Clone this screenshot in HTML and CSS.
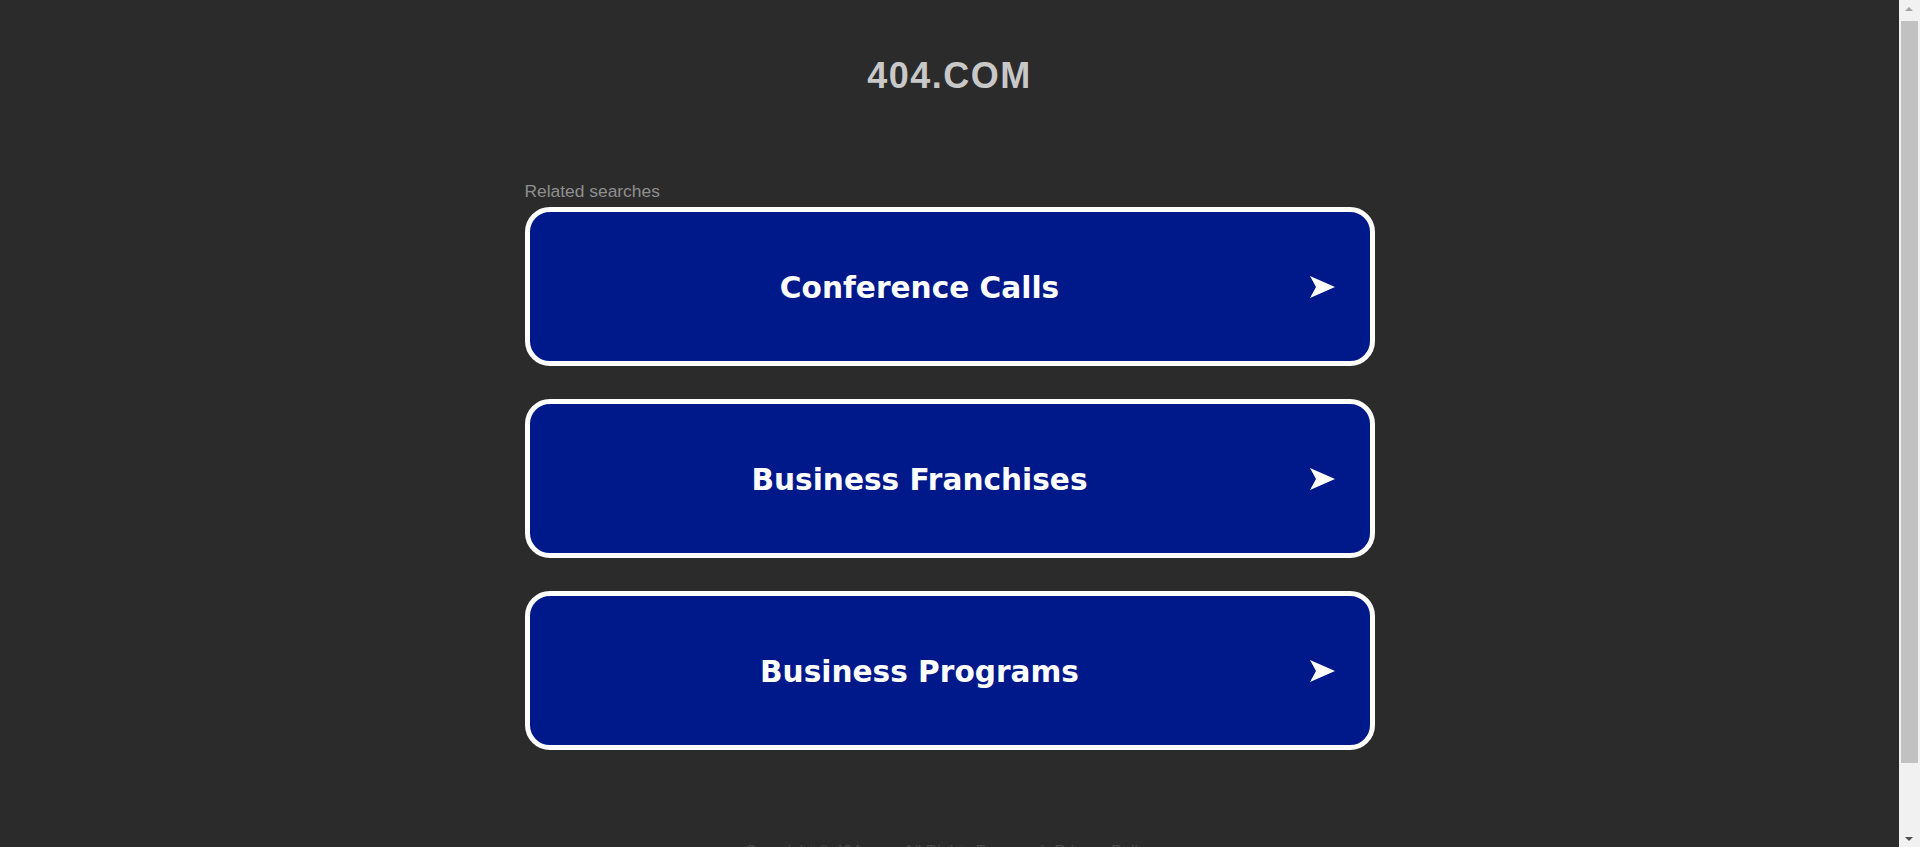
FILE: index.html
```html
<!DOCTYPE html>
<html lang="en">
<head>
<meta charset="utf-8">
<title>404.com</title>
<link rel="stylesheet" href="styles.css">
</head>
<body>
<div class="page">
  <header class="header">
    <h1 class="logo">404.COM</h1>
  </header>
  <main class="content">
    <div class="label">Related searches</div>
    <ul class="links">
      <li><a class="link" href="#"><span class="link-text">Conference Calls</span><svg class="arrow" viewBox="0 0 25 22" aria-hidden="true"><polygon points="0,0 25,11 0,22 6,11"/></svg></a></li>
      <li><a class="link" href="#"><span class="link-text">Business Franchises</span><svg class="arrow" viewBox="0 0 25 22" aria-hidden="true"><polygon points="0,0 25,11 0,22 6,11"/></svg></a></li>
      <li><a class="link" href="#"><span class="link-text">Business Programs</span><svg class="arrow" viewBox="0 0 25 22" aria-hidden="true"><polygon points="0,0 25,11 0,22 6,11"/></svg></a></li>
    </ul>
  </main>
  <footer class="footer">
    <span>Copyright &copy; 404.com. All Rights Reserved.</span>
    <a href="#" class="footer-link">Privacy Policy</a>
  </footer>
</div>
<div class="scrollbar" aria-hidden="true">
  <div class="sb-btn sb-up"></div>
  <div class="sb-track"><div class="sb-thumb"></div></div>
  <div class="sb-btn sb-down"></div>
</div>
</body>
</html>
```

FILE: styles.css
```css
html, body {
  margin: 0;
  padding: 0;
}
html {
  overflow: hidden;
}
body {
  background: #2b2b2b;
  font-family: "Liberation Sans", Arial, sans-serif;
}
.page {
  display: flex;
  flex-direction: column;
  align-items: center;
  min-height: 923px;
  margin-right: 21px;
}
.header {
  padding-top: 50px;
}
.logo {
  margin: 0;
  font-size: 36px;
  line-height: 52px;
  font-weight: bold;
  letter-spacing: 1.5px;
  color: #c8c8c8;
}
.content {
  width: 850px;
  margin-top: 79px;
}
.label {
  font-size: 17.4px;
  line-height: 20px;
  color: #8f8f8f;
  margin-bottom: 6px;
}
.links {
  list-style: none;
  margin: 0;
  padding: 0;
  display: flex;
  flex-direction: column;
  gap: 33px;
}
.link {
  display: flex;
  align-items: center;
  box-sizing: border-box;
  height: 159px;
  border: 5px solid #ffffff;
  border-radius: 25px;
  background: #00198a;
  color: #ffffff;
  text-decoration: none;
  padding-right: 35px;
}
.link-text {
  flex: 1;
  text-align: center;
  font-family: "DejaVu Sans", Verdana, sans-serif;
  font-weight: bold;
  font-size: 29.6px;
  padding-top: 3px;
}
.arrow {
  width: 25px;
  height: 22px;
  fill: #ffffff;
}
.footer {
  margin-top: 93px;
  font-size: 16px;
  color: #4a4a4a;
  display: flex;
  gap: 6px;
}
.footer-link {
  color: #4a4a4a;
  text-decoration: none;
}
.scrollbar {
  position: fixed;
  top: 0;
  right: 0;
  bottom: 0;
  width: 21px;
  background: #f1f1f1;
  display: flex;
  flex-direction: column;
}
.sb-btn {
  height: 17px;
  position: relative;
}
.sb-up::after,
.sb-down::after {
  content: "";
  position: absolute;
  left: 6px;
  border-left: 4.5px solid transparent;
  border-right: 4.5px solid transparent;
}
.sb-up::after {
  top: 7px;
  border-bottom: 4px solid #a3a3a3;
}
.sb-down::after {
  top: 7px;
  border-top: 4px solid #505050;
}
.sb-track {
  flex: 1;
  padding: 4px 2px 0 2px;
  display: flex;
  flex-direction: column;
}
.sb-thumb {
  height: 742px;
  background: #c1c1c1;
}
```
